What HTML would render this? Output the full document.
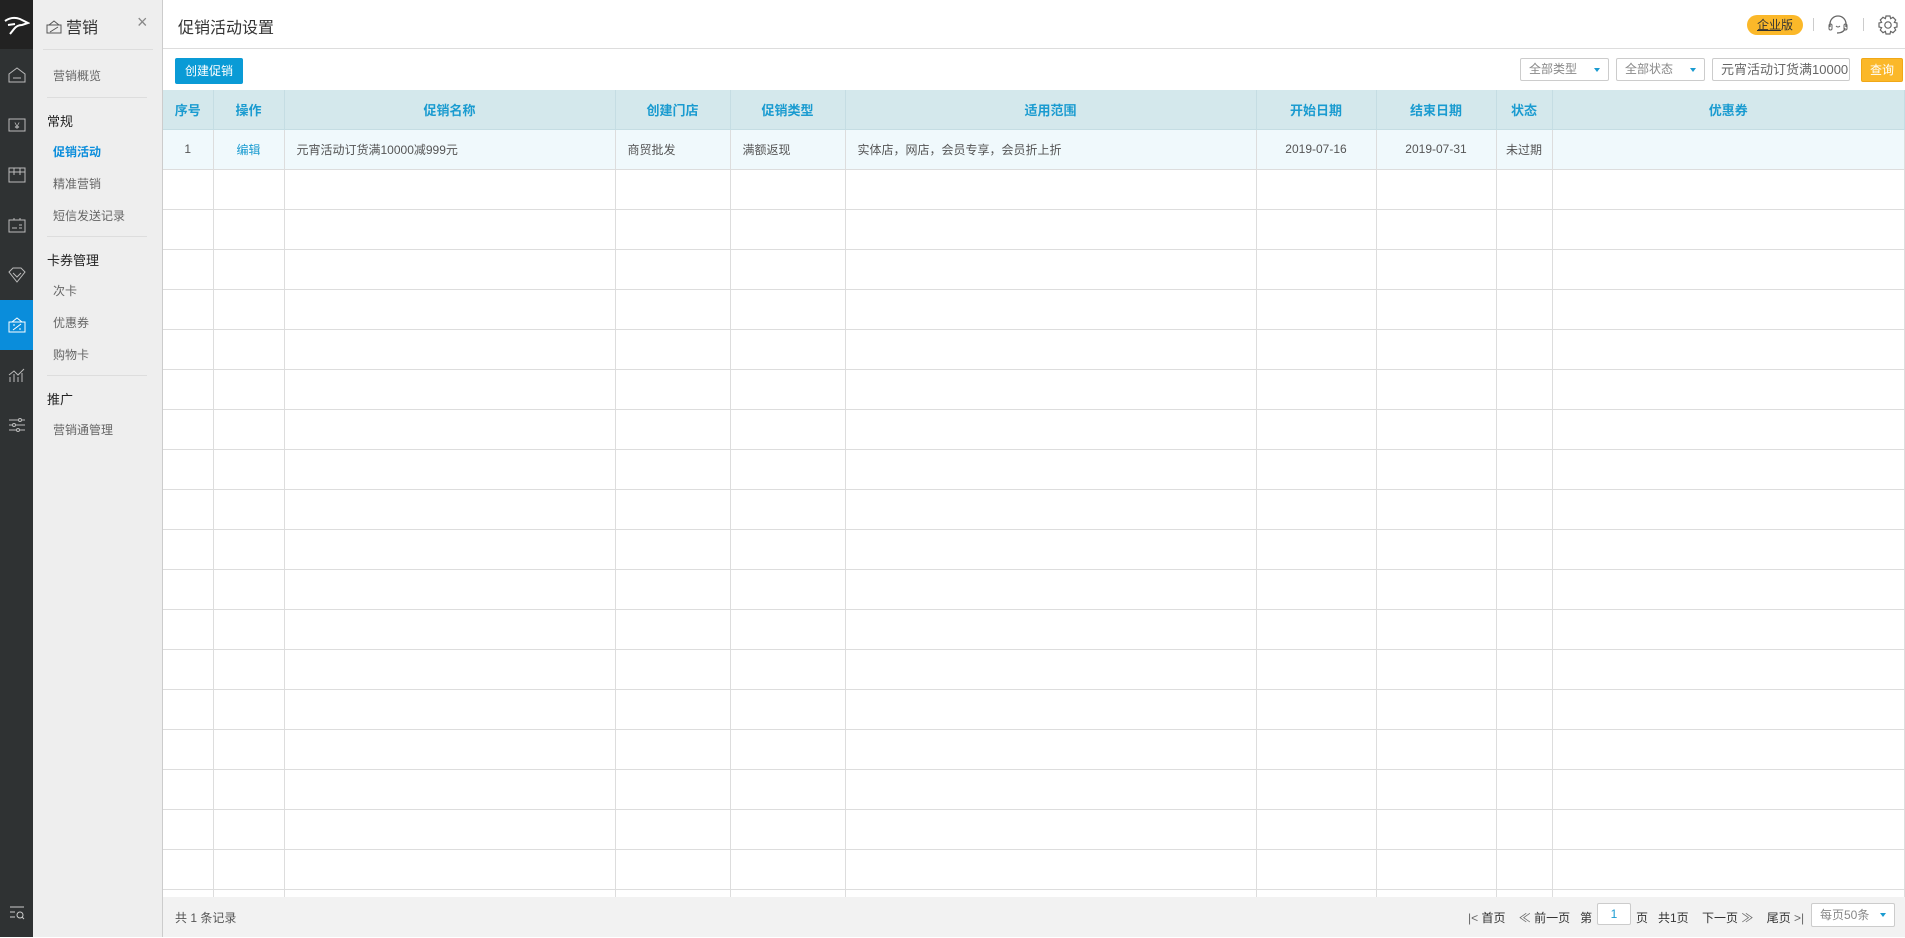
<!DOCTYPE html>
<html><head><meta charset="utf-8"><style>
*{margin:0;padding:0;box-sizing:border-box}
body{width:1905px;height:937px;overflow:hidden;font-family:"Liberation Sans","Noto Sans CJK SC",sans-serif;font-size:13px;color:#333;background:#fff;position:relative}
.abs{position:absolute}
#bar{left:0;top:0;width:33px;height:937px;background:#2f3233}
#bar .top{position:absolute;left:0;top:0;width:33px;height:49px;background:#222}
#bar .ic{position:absolute;left:0;width:33px;height:50px;display:flex;align-items:center;justify-content:center}
#bar .act{background:#0a8ddb}
#nav{left:33px;top:0;width:130px;height:937px;background:#eee;border-right:1px solid #ccc}
#nav .t{position:absolute;white-space:nowrap}
#nav .sep{position:absolute;left:14px;width:100px;height:1px;background:#ddd}
.h{left:14px;font-size:13px;color:#222}
.i{left:20px;font-size:12px;color:#666}
table{border-collapse:collapse;table-layout:fixed;position:absolute;left:163px;top:90px;width:1742px}
td,th{border:1px solid #ddd;text-align:center;font-size:12px;white-space:nowrap;overflow:hidden}
tr{height:40px}
tr.hd{height:39px}
th{background:#d4e8ec;color:#1a9bd0;font-size:13px;border-color:#c5dde3;border-top:none}
tr.r1 td{background:#f0f9fc;color:#555}
td:first-child,th:first-child{border-left:none}
.sel{position:absolute;top:58px;height:23px;border:1px solid #ccc;border-radius:2px;font-size:12px;color:#888;padding-left:8px;line-height:21px;background:#fff}
.sel i{position:absolute;right:8px;top:9px;border:3px solid transparent;border-top:4px solid #1a9bd0}
</style></head><body>
<div id="bar" class="abs"><div class="top"></div>
<div class="ic" style="top:0"><svg width="26" height="20" viewBox="0 0 26 20"><path d="M1 6 Q8 1 16 4 L24 8 L18 10 Q13 10 10 14 L6 19 M4 10 L11 9" stroke="#fff" stroke-width="2" fill="none"/></svg></div>
<div class="ic" style="top:50px"><svg width="18" height="16"><path d="M1 7 L9 1 L17 7 V15 H1 Z M5 11 H13" stroke="#bbb" fill="none"/></svg></div>
<div class="ic" style="top:100px"><svg width="18" height="14"><rect x="1" y="1" width="16" height="12" fill="none" stroke="#bbb"/><text x="9" y="11" font-size="9" fill="#bbb" text-anchor="middle">¥</text></svg></div>
<div class="ic" style="top:150px"><svg width="18" height="16"><path d="M1 1 H17 V15 H1 Z M1 5 H17 M6 1 V8 M12 1 V8" stroke="#bbb" fill="none"/></svg></div>
<div class="ic" style="top:200px"><svg width="18" height="16"><path d="M1 3 H17 V15 H1 Z M6 1 V3 M12 1 V3 M4 11 H9 M11 8 H14 M11 11 H14" stroke="#bbb" fill="none"/></svg></div>
<div class="ic" style="top:250px"><svg width="18" height="16"><path d="M1 5 L5 1 H13 L17 5 L9 15 Z M5 6 L9 10 L13 6" stroke="#bbb" fill="none"/></svg></div>
<div class="ic act" style="top:300px"><svg width="18" height="16"><path d="M1 5 H17 V15 H1 Z M4 5 L9 1 L14 5 M5 13 L13 7 M5 8 H7 M11 12 H13" stroke="#fff" fill="none"/></svg></div>
<div class="ic" style="top:350px"><svg width="18" height="16"><path d="M2 15 V10 M6 15 V7 M10 15 V10 M14 15 V6 M1 8 L6 4 L10 8 L16 2" stroke="#bbb" fill="none"/></svg></div>
<div class="ic" style="top:400px"><svg width="18" height="16"><path d="M1 3 H17 M1 8 H17 M1 13 H17" stroke="#bbb" fill="none"/><circle cx="12" cy="3" r="1.5" fill="#2f3233" stroke="#bbb"/><circle cx="6" cy="8" r="1.5" fill="#2f3233" stroke="#bbb"/><circle cx="10" cy="13" r="1.5" fill="#2f3233" stroke="#bbb"/></svg></div>
<div class="ic" style="top:888px"><svg width="18" height="16"><path d="M2 2 H16 M2 7 H7 M2 12 H7" stroke="#ccc" fill="none"/><circle cx="12" cy="10" r="3" stroke="#ccc" fill="none"/><path d="M14 12 L16 14" stroke="#ccc"/></svg></div>
</div>
<div id="nav" class="abs">
<div class="t" style="left:13px;top:14px;font-size:16px;color:#333"><svg width="16" height="14" style="vertical-align:-1px;margin-right:4px"><path d="M1 5 H15 V13 H1 Z M3 5 L8 1 L13 5 M4 12 L12 7" stroke="#555" fill="none"/></svg>营销</div>
<div class="t" style="left:104px;top:12px;font-size:18px;color:#888">×</div>
<div class="sep" style="top:49px;left:10px;width:110px"></div>
<div class="t i" style="top:67px">营销概览</div>
<div class="sep" style="top:97px"></div>
<div class="t h" style="top:111px">常规</div>
<div class="t i" style="top:143px;color:#0a8ddb;font-weight:bold">促销活动</div>
<div class="t i" style="top:175px">精准营销</div>
<div class="t i" style="top:207px">短信发送记录</div>
<div class="sep" style="top:236px"></div>
<div class="t h" style="top:250px">卡券管理</div>
<div class="t i" style="top:282px">次卡</div>
<div class="t i" style="top:314px">优惠券</div>
<div class="t i" style="top:346px">购物卡</div>
<div class="sep" style="top:375px"></div>
<div class="t h" style="top:389px">推广</div>
<div class="t i" style="top:421px">营销通管理</div>
</div>
<div class="abs" style="left:163px;top:0;width:1742px;height:49px;border-bottom:1px solid #ddd"></div>
<div class="abs" style="left:178px;top:14px;font-size:16px;color:#333">促销活动设置</div>
<div class="abs" style="left:1747px;top:15px;width:56px;height:20px;background:#fbb829;border-radius:10px;font-size:12px;text-align:center;line-height:20px;color:#333"><u>企业</u>版</div>
<div class="abs" style="left:1813px;top:18px;width:1px;height:13px;background:#ccc"></div>
<svg class="abs" style="left:1827px;top:14px" width="22" height="22"><path d="M3 13 V10 A8 8 0 0 1 19 10 V13 M10 19 Q17 19 18 14" stroke="#666" fill="none" stroke-width="1.3"/><rect x="2" y="10" width="3" height="6" rx="1.5" fill="none" stroke="#666"/><rect x="17" y="10" width="3" height="6" rx="1.5" fill="none" stroke="#666"/><path d="M9 12 Q11 14 13 12" stroke="#666" fill="none"/></svg>
<div class="abs" style="left:1863px;top:18px;width:1px;height:13px;background:#ccc"></div>
<svg class="abs" style="left:1877px;top:14px" width="22" height="22" viewBox="0 0 22 22"><path d="M9 2 H13 L13.6 4.6 L16 3.3 L18.7 6 L17.4 8.4 L20 9 V13 L17.4 13.6 L18.7 16 L16 18.7 L13.6 17.4 L13 20 H9 L8.4 17.4 L6 18.7 L3.3 16 L4.6 13.6 L2 13 V9 L4.6 8.4 L3.3 6 L6 3.3 L8.4 4.6 Z" stroke="#666" fill="none" stroke-width="1.2"/><circle cx="11" cy="11" r="3.2" stroke="#666" fill="none" stroke-width="1.2"/></svg>
<div class="abs" style="left:175px;top:58px;width:68px;height:26px;background:#0a9bd6;border-radius:2px;color:#fff;font-size:12px;text-align:center;line-height:26px">创建促销</div>
<div class="sel" style="left:1520px;width:89px">全部类型<i></i></div>
<div class="sel" style="left:1616px;width:89px">全部状态<i></i></div>
<div class="sel" style="left:1712px;width:138px;color:#666;font-size:13px;overflow:hidden;white-space:nowrap">元宵活动订货满10000</div>
<div class="abs" style="left:1861px;top:58px;width:42px;height:24px;background:#fbb829;border:1px solid #f0a818;border-radius:2px;color:#fff;font-size:12px;text-align:center;line-height:22px">查询</div>
<table>
<colgroup><col style="width:50px"><col style="width:71px"><col style="width:331px"><col style="width:115px"><col style="width:115px"><col style="width:411px"><col style="width:120px"><col style="width:120px"><col style="width:56px"><col></colgroup>
<tr class="hd"><th>序号</th><th>操作</th><th>促销名称</th><th>创建门店</th><th>促销类型</th><th>适用范围</th><th>开始日期</th><th>结束日期</th><th>状态</th><th>优惠券</th></tr>
<tr class="r1"><td>1</td><td style="color:#1a9bd0">编辑</td><td style="text-align:left;padding-left:12px">元宵活动订货满10000减999元</td><td style="text-align:left;padding-left:12px">商贸批发</td><td style="text-align:left;padding-left:12px">满额返现</td><td style="text-align:left;padding-left:12px">实体店，网店，会员专享，会员折上折</td><td>2019-07-16</td><td>2019-07-31</td><td>未过期</td><td></td></tr>
<tr><td></td><td></td><td></td><td></td><td></td><td></td><td></td><td></td><td></td><td></td></tr>
<tr><td></td><td></td><td></td><td></td><td></td><td></td><td></td><td></td><td></td><td></td></tr>
<tr><td></td><td></td><td></td><td></td><td></td><td></td><td></td><td></td><td></td><td></td></tr>
<tr><td></td><td></td><td></td><td></td><td></td><td></td><td></td><td></td><td></td><td></td></tr>
<tr><td></td><td></td><td></td><td></td><td></td><td></td><td></td><td></td><td></td><td></td></tr>
<tr><td></td><td></td><td></td><td></td><td></td><td></td><td></td><td></td><td></td><td></td></tr>
<tr><td></td><td></td><td></td><td></td><td></td><td></td><td></td><td></td><td></td><td></td></tr>
<tr><td></td><td></td><td></td><td></td><td></td><td></td><td></td><td></td><td></td><td></td></tr>
<tr><td></td><td></td><td></td><td></td><td></td><td></td><td></td><td></td><td></td><td></td></tr>
<tr><td></td><td></td><td></td><td></td><td></td><td></td><td></td><td></td><td></td><td></td></tr>
<tr><td></td><td></td><td></td><td></td><td></td><td></td><td></td><td></td><td></td><td></td></tr>
<tr><td></td><td></td><td></td><td></td><td></td><td></td><td></td><td></td><td></td><td></td></tr>
<tr><td></td><td></td><td></td><td></td><td></td><td></td><td></td><td></td><td></td><td></td></tr>
<tr><td></td><td></td><td></td><td></td><td></td><td></td><td></td><td></td><td></td><td></td></tr>
<tr><td></td><td></td><td></td><td></td><td></td><td></td><td></td><td></td><td></td><td></td></tr>
<tr><td></td><td></td><td></td><td></td><td></td><td></td><td></td><td></td><td></td><td></td></tr>
<tr><td></td><td></td><td></td><td></td><td></td><td></td><td></td><td></td><td></td><td></td></tr>
<tr><td></td><td></td><td></td><td></td><td></td><td></td><td></td><td></td><td></td><td></td></tr>
<tr><td></td><td></td><td></td><td></td><td></td><td></td><td></td><td></td><td></td><td></td></tr>
</table>
<div class="abs" style="left:163px;top:897px;width:1742px;height:40px;background:#f2f2f2"></div>
<div class="abs" style="left:175px;top:909px;font-size:12px;color:#555">共 1 条记录</div>
<div class="abs" style="left:1468px;top:909px;font-size:12px;color:#333;white-space:nowrap;word-spacing:0">
<span style="color:#666">|&lt;</span> 首页 &nbsp;&nbsp; <span style="color:#666">≪</span> 前一页 &nbsp;&nbsp;第</div>
<div class="abs" style="left:1597px;top:903px;width:34px;height:22px;background:#fff;border:1px solid #ccc;border-radius:2px;text-align:center;line-height:20px;color:#1a9bd0;font-size:12px">1</div>
<div class="abs" style="left:1636px;top:909px;font-size:12px;color:#333;white-space:nowrap">页 &nbsp;&nbsp;共1页 &nbsp;&nbsp; 下一页 <span style="color:#666">≫</span> &nbsp;&nbsp; 尾页 <span style="color:#666">&gt;|</span></div>
<div class="sel" style="left:1811px;top:903px;width:84px;height:24px;line-height:22px">每页50条<i></i></div>
</body></html>
